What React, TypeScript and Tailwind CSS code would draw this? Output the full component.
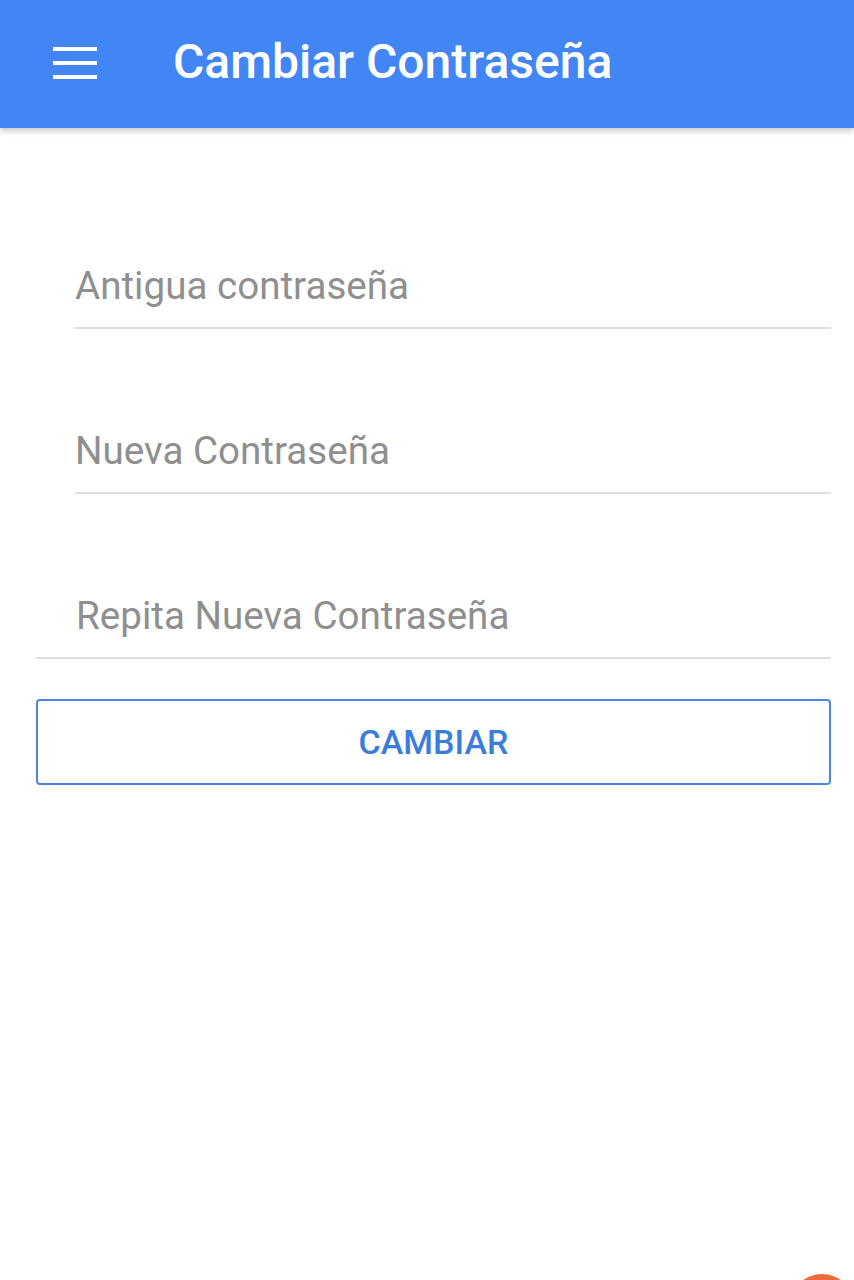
import React from "react"

const Field = ({ label, full }: { label: string; full?: boolean }) => (
  <div
    className={`h-[165px] flex items-end border-b-2 border-[#dedede] pb-[21px] ${
      full ? "ml-[36px] pl-[40px]" : "ml-[75px]"
    } mr-[23px]`}
  >
    <span className="text-[38.6px] leading-none text-[#8f8f8f]">{label}</span>
  </div>
)

export default function App() {
  return (
    <div
      className="relative h-[1280px] w-full overflow-hidden bg-white"
      style={{ fontFamily: "Roboto, 'Noto Sans', sans-serif" }}
    >
      <header className="h-[128px] bg-[#4286f5] flex items-center shadow-[0_3px_6px_rgba(0,0,0,0.22)] relative z-10">
        <div className="ml-[53px] w-[44px] flex flex-col gap-[10px] mb-[2px]">
          <span className="block h-[4px] bg-white" />
          <span className="block h-[4px] bg-white" />
          <span className="block h-[4px] bg-white" />
        </div>
        <h1 className="ml-[76px] text-[48px] font-medium text-white leading-none mb-[4px]">
          Cambiar Contraseña
        </h1>
      </header>

      <main className="pt-[36px]">
        <Field label="Antigua contraseña" />
        <Field label="Nueva Contraseña" />
        <Field label="Repita Nueva Contraseña" full />

        <button className="mt-[40px] ml-[36px] w-[795px] h-[86px] border-2 border-[#4a86e3] rounded-[4px] flex items-center justify-center">
          <span className="text-[34px] font-medium text-[#3b7ddb] leading-none">CAMBIAR</span>
        </button>
      </main>

      <div className="absolute left-[790px] top-[1274px] w-[64px] h-[64px] rounded-full bg-[#ec6a3c]" />
    </div>
  )
}
